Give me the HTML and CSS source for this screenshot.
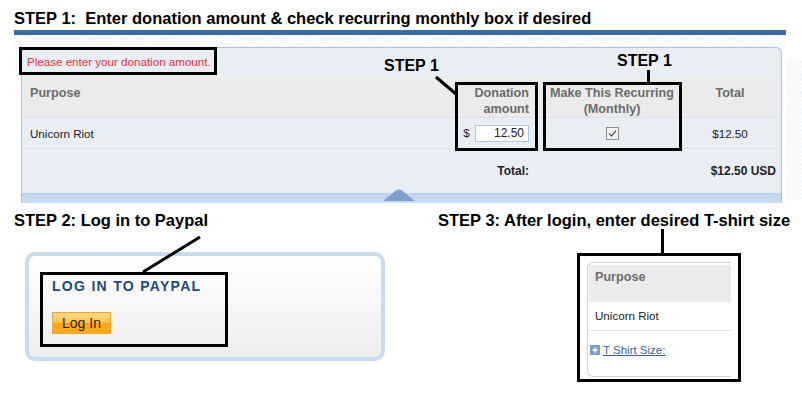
FILE: index.html
```html
<!DOCTYPE html>
<html lang="en">
<head>
    <meta charset="UTF-8">
    <meta name="viewport" content="width=device-width, initial-scale=1.0">
    <title>Donate - How To</title>
    <link rel="stylesheet" href="styles.css">
</head>
<body>
    <!-- Step 1: the cart -->
    <section class="step-one">
        <h2 class="step-title">STEP 1:&nbsp; Enter donation amount &amp; check recurring monthly box if desired</h2>
        <div class="bar"></div>
        <div class="hatch"></div>

        <div class="panel">
            <div class="msg">Please enter your donation amount.</div>
            <table class="cart">
                <colgroup>
                    <col class="c-purpose">
                    <col class="c-amount">
                    <col class="c-recur">
                    <col class="c-total">
                </colgroup>
                <thead>
                    <tr>
                        <th class="purpose">Purpose</th>
                        <th class="amount">Donation<br>amount</th>
                        <th class="recur">Make This Recurring<br>(Monthly)</th>
                        <th class="total">Total</th>
                    </tr>
                </thead>
                <tbody>
                    <tr class="item">
                        <td class="purpose">Unicorn Riot</td>
                        <td class="amount">$ <input class="amount-input" type="text" value="12.50"></td>
                        <td class="recur">
                            <span class="check">
                                <svg width="13" height="13" viewBox="0 0 13 13">
                                    <rect x="0.5" y="0.5" width="12" height="12" fill="#f4f4f4" stroke="#8d8d8d"/>
                                    <polyline points="3,6.5 5.5,9 10,3.8" fill="none" stroke="#5a5a5a" stroke-width="1.3"/>
                                </svg>
                            </span>
                        </td>
                        <td class="total">$12.50</td>
                    </tr>
                    <tr class="sum">
                        <td></td>
                        <td class="amount"><b>Total:</b></td>
                        <td></td>
                        <td class="grand">$12.50 USD</td>
                    </tr>
                </tbody>
            </table>
            <div class="strip">
                <svg class="handle" width="32" height="12" viewBox="0 0 32 12">
                    <path d="M0 12 L13 1.5 Q16 -0.5 19 1.5 L32 12 Z" fill="#7da1cc"/>
                </svg>
            </div>
        </div>
        <div class="side-hatch"></div>

        <!-- annotations -->
        <div class="mark mark-msg"></div>
        <div class="mark mark-amount"></div>
        <div class="mark mark-recur"></div>
        <span class="label label-a">STEP 1</span>
        <span class="label label-b">STEP 1</span>
        <span class="stem"></span>
        <svg class="pointer pointer-a" width="30" height="26" viewBox="0 0 30 26">
            <line x1="6" y1="5" x2="26" y2="22" stroke="#000" stroke-width="3"/>
        </svg>
    </section>

    <section class="lower">
        <!-- Step 2: paypal -->
        <div class="col-login">
            <h2 class="step-title">STEP 2: Log in to Paypal</h2>
            <svg class="pointer pointer-login" width="64" height="40" viewBox="0 0 64 40">
                <line x1="60" y1="2" x2="3" y2="37" stroke="#000" stroke-width="3"/>
            </svg>
            <div class="login-box">
                <div class="callout">
                    <h3 class="login-head">LOG IN TO PAYPAL</h3>
                    <button class="login-btn">Log In</button>
                </div>
            </div>
        </div>

        <!-- Step 3: t-shirt size -->
        <div class="col-size">
            <h2 class="step-title">STEP 3: After login, enter desired T-shirt size</h2>
            <div class="connector"></div>
            <div class="crop">
                <div class="mini">
                    <div class="mini-head">Purpose</div>
                    <div class="mini-row">Unicorn Riot</div>
                    <div class="mini-opt">
                        <svg width="10" height="10" viewBox="0 0 10 10">
                            <rect width="10" height="10" fill="#7c9ecb"/>
                            <path d="M5 2.5 V7.5 M2.5 5 H7.5" stroke="#fff" stroke-width="1.4"/>
                        </svg>
                        <a href="#">T Shirt Size:</a>
                    </div>
                </div>
            </div>
        </div>
    </section>
</body>
</html>
```

FILE: styles.css
```css
body {
    margin: 0;
    background-color: #fff;
    font-family: "Liberation Sans", Arial, sans-serif;
    color: #222;
}

.step-title {
    margin: 0 0 0 14px;
    font-size: 16.5px;
    line-height: 18px;
    font-weight: bold;
    color: #000;
    white-space: nowrap;
}

/* Step 1 */
.step-one {
    position: relative;
    padding-top: 9px;
}

.bar {
    margin: 3px 0 0 14px;
    width: 772px;
    height: 5px;
    background-color: #3d6b9e;
}

.hatch {
    margin-left: 14px;
    width: 772px;
    height: 12px;
    background: repeating-linear-gradient(135deg, #f3f5f8 0 1px, #fbfcfd 1px 3px);
}

.side-hatch {
    position: absolute;
    left: 786px;
    top: 60px;
    width: 16px;
    height: 140px;
    background: repeating-linear-gradient(135deg, #f1f4f7 0 1px, #fafbfc 1px 3px);
}

.panel {
    position: relative;
    margin-left: 21px;
    width: 759px;
    border: 1px solid #a9c3df;
    border-bottom: none;
    border-radius: 0 6px 0 0;
    background-color: #e9eef4;
}

.msg {
    height: 28px;
    line-height: 28px;
    padding-left: 5px;
    font-size: 11.6px;
    color: #e0323f;
}

.cart {
    margin-left: 2px;
    width: 752px;
    border-collapse: collapse;
    table-layout: fixed;
    font-size: 11.6px;
}

.c-purpose { width: 431px; }
.c-amount { width: 85px; }
.c-recur { width: 144px; }
.c-total { width: 92px; }

.cart th {
    height: 41px;
    padding: 9px 0 0 0;
    box-sizing: border-box;
    vertical-align: top;
    background-color: #ebebeb;
    color: #6b6b6b;
    font-size: 12.6px;
    line-height: 16px;
    border-bottom: 1px solid #dde2e8;
}

.cart th.purpose {
    text-align: left;
    padding-left: 6px;
}

.cart .amount {
    text-align: right;
    padding-right: 11px;
}

.cart .recur,
.cart .total {
    text-align: center;
}

.cart td {
    padding-top: 0;
    padding-bottom: 0;
}

.item td {
    height: 30px;
    border-bottom: 1px solid #dde2e8;
}

.item td.purpose {
    padding-left: 6px;
}

.amount-input {
    width: 54px;
    height: 17px;
    box-sizing: border-box;
    margin: 0 0 0 2px;
    padding: 0 4px 0 0;
    border: 1px solid #abc8e6;
    background-color: #fff;
    font-family: inherit;
    font-size: 12px;
    text-align: right;
    color: #222;
    vertical-align: middle;
}

.check {
    display: inline-block;
    height: 13px;
    vertical-align: middle;
}

.check svg {
    display: block;
}

.sum td {
    height: 44px;
    font-weight: bold;
    font-size: 12px;
}

.sum .grand {
    text-align: right;
    padding-right: 0;
}

.strip {
    position: relative;
    height: 10px;
    background: linear-gradient(#bcd2ea, #cddff1);
}

.handle {
    position: absolute;
    left: 361px;
    top: -4px;
}

/* annotation marks */
.mark {
    position: absolute;
    box-sizing: border-box;
    border: 3px solid #000;
}

.mark-msg { left: 19px; top: 47px; width: 198px; height: 28px; }
.mark-amount { left: 455px; top: 82px; width: 83px; height: 69px; }
.mark-recur { left: 543px; top: 82px; width: 139px; height: 69px; }

.label {
    position: absolute;
    font-size: 16px;
    line-height: 18px;
    font-weight: bold;
    color: #000;
}

.label-a { left: 384px; top: 57px; }
.label-b { left: 617px; top: 52px; }

.stem {
    position: absolute;
    left: 647px;
    top: 70px;
    width: 3px;
    height: 12px;
    background-color: #000;
}

.pointer {
    position: absolute;
}

.pointer-a { left: 430px; top: 72px; }

/* Steps 2 and 3 */
.lower {
    display: grid;
    grid-template-columns: 438px 1fr;
    margin-top: 8px;
}

.col-login {
    position: relative;
}

.pointer-login { left: 140px; top: 24px; }

.login-box {
    margin: 23px 0 0 25px;
    width: 360px;
    height: 109px;
    box-sizing: border-box;
    padding: 16px 0 0 11px;
    border: 4px solid #c9dcef;
    border-radius: 10px;
    background: linear-gradient(#ffffff, #eeeeee);
}

.callout {
    width: 188px;
    height: 75px;
    box-sizing: border-box;
    padding: 3px 0 0 9px;
    border: 3px solid #000;
}

.login-head {
    margin: 0;
    font-size: 14px;
    line-height: 16px;
    letter-spacing: 1.3px;
    color: #1d4a80;
}

.login-btn {
    display: block;
    margin-top: 18px;
    width: 59px;
    height: 22px;
    padding: 0;
    border: 1px solid #e4a540;
    background: linear-gradient(#ffd98a, #ffc04a 50%, #ffa414 51%, #ffab20);
    font-family: inherit;
    font-size: 14px;
    color: #222;
}

.col-size .step-title {
    margin-left: 0;
}

.connector {
    margin-left: 223px;
    width: 3px;
    height: 24px;
    background-color: #000;
}

.crop {
    margin-left: 139px;
    width: 164px;
    height: 129px;
    box-sizing: border-box;
    border: 3px solid #000;
    overflow: hidden;
    background-color: #fff;
}

.mini {
    margin: 6px 0 0 7px;
    width: 144px;
    height: 115px;
    box-sizing: border-box;
    padding: 2px 0 0 1px;
    border: 1px solid #d0d0d0;
    border-right: none;
    border-radius: 6px 0 0 6px;
    font-size: 11.6px;
}

.mini-head {
    height: 37px;
    box-sizing: border-box;
    padding: 4px 0 0 6px;
    background-color: #ebebeb;
    font-weight: bold;
    font-size: 12.6px;
    line-height: 16px;
    color: #6b6b6b;
}

.mini-row {
    height: 28px;
    line-height: 28px;
    padding-left: 6px;
    border-bottom: 1px solid #e3e3e3;
}

.mini-opt {
    display: flex;
    align-items: center;
    gap: 3px;
    padding: 11px 0 0 1px;
    line-height: 16px;
}

.mini-opt a {
    font-size: 11.5px;
    color: #3566a0;
}
```
